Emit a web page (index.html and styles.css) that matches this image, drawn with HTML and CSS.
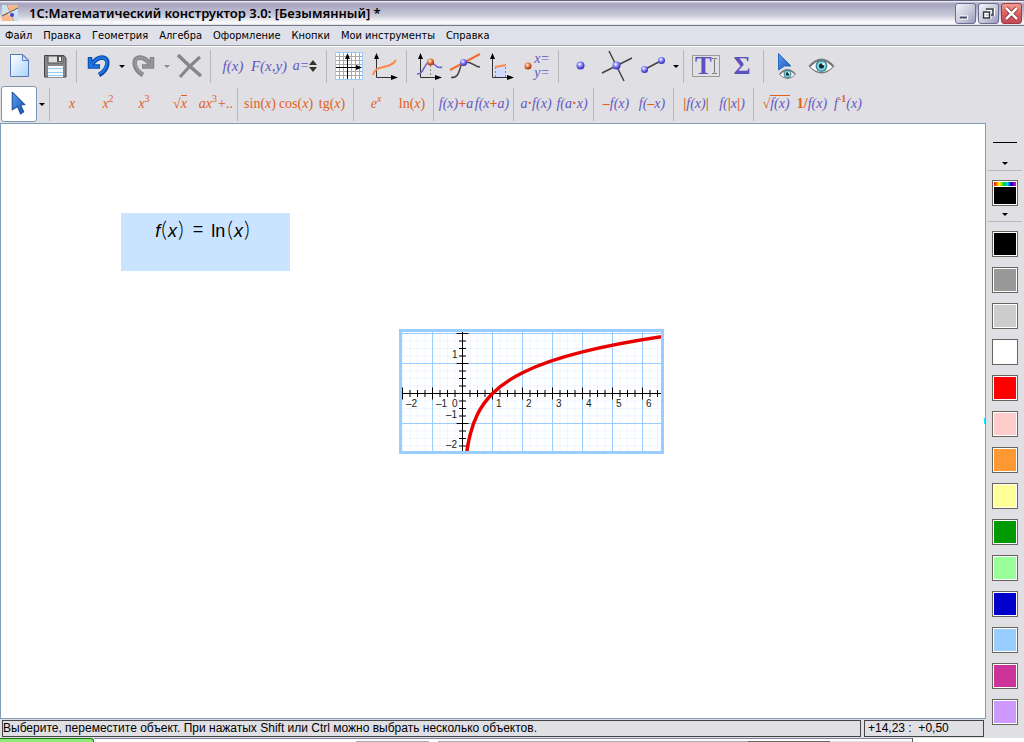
FILE: index.html
```html
<!DOCTYPE html>
<html lang="ru">
<head>
<meta charset="utf-8">
<title>1С:Математический конструктор 3.0</title>
<link rel="stylesheet" href="styles.css">
</head>
<body>
<svg class="defs" aria-hidden="true">
  <defs>
    <radialGradient id="blue" cx=".4" cy=".35" r=".6"><stop offset="0" stop-color="#fff"/><stop offset=".45" stop-color="#8a8cff"/><stop offset="1" stop-color="#3a35b8"/></radialGradient>
    <radialGradient id="orange" cx=".4" cy=".35" r=".6"><stop offset="0" stop-color="#fff"/><stop offset=".45" stop-color="#f08a50"/><stop offset="1" stop-color="#a83808"/></radialGradient>
    <linearGradient id="page" x1="0" y1="0" x2="1" y2="1"><stop offset="0" stop-color="#fff"/><stop offset="1" stop-color="#a8d4fa"/></linearGradient>
    <linearGradient id="cursor" x1="0" y1="0" x2="1" y2="1"><stop offset="0" stop-color="#5aa0f0"/><stop offset="1" stop-color="#1850b0"/></linearGradient>
    <symbol id="axes" viewBox="0 0 36 36"><path d="M9.5 8V29.5H28" fill="none" stroke="#333"/><path d="M9.5 5l2.500 6h-5zM31 29.500l-7-2.500v5z"/></symbol>
    <symbol id="eye" viewBox="0 0 26 16"><path d="M0 8Q13-7 26 8Q13 23 0 8z" fill="#777"/><path d="M2 9Q13-3 24 9Q13 19 2 9z" fill="#fff"/><circle cx="13" cy="8" r="6" fill="#3d8b96"/><circle cx="13" cy="8" r="4.500" fill="#7ed5dc"/><circle cx="13" cy="8" r="2.500" fill="#123"/><circle cx="15" cy="6" r="1.300" fill="#fff"/></symbol>
    <symbol id="pointer" viewBox="0 0 14 22"><path d="M1 0L13 12L9 12.500L12 19L9 21L6 14L1 17z" fill="url(#cursor)" stroke="#1c4f9c"/></symbol>
  </defs>
</svg>

<header class="titlebar">
  <svg class="app-icon" width="16" height="16" viewBox="0 0 16 16"><path d="M0 0H16V16H0z" fill="#c8e4f4"/><path d="M0 10L5 7L11 16H0zM6 0H16V3L8 7z" fill="#f7b98a"/><path d="M0 11L16 3" stroke="#555"/><path d="M5 0L12 16" stroke="#f08040"/><circle cx="10" cy="10" r="2" fill="#4040d0"/></svg>
  <h1 class="title">1С:Математический конструктор 3.0: [Безымянный] *</h1>
  <button class="win" aria-label="Свернуть"><svg width="19" height="19"><path d="M4 13.500h8" stroke="#fff" stroke-width="4"/><path d="M4 13.500h7" stroke="#446" stroke-width="2"/></svg></button>
  <button class="win" aria-label="Восстановить"><svg width="19" height="19" fill="none"><path d="M8 5.500h6.500v6" stroke="#fff" stroke-width="3"/><path d="M5 8.500h6v5H5z" stroke="#fff" stroke-width="3"/><path d="M7 5h7v6h-2M4.500 8h6v6h-6z" stroke="#334" stroke-width="1.500"/></svg></button>
  <button class="win close" aria-label="Закрыть"><svg width="19" height="19"><path d="M4 4l11 11M15 4L4 15" stroke="#702028" stroke-width="4"/><path d="M4 4l11 11M15 4L4 15" stroke="#fff" stroke-width="2.500"/></svg></button>
</header>

<nav class="menu">
  <button>Файл</button><button>Правка</button><button>Геометрия</button><button>Алгебра</button><button>Оформление</button><button>Кнопки</button><button>Мои инструменты</button><button>Справка</button>
</nav>

<div class="toolbars">
  <div class="toolbar" role="toolbar">
    <button class="tool" aria-label="Новый"><svg class="icon" viewBox="0 0 36 36"><path d="M9.500 6.500H22L27.500 12V28.500H9.500z" fill="url(#page)" stroke="#5878b8"/><path d="M21.500 7v5.500H27z" fill="#d5e9fc" stroke="#5878b8"/></svg></button>
    <button class="tool" aria-label="Сохранить"><svg class="icon" viewBox="0 0 36 36"><path d="M7.500 7.500H27L29 10V29H7.500z" fill="#888" stroke="#444"/><path d="M11 8h15v7H11z" fill="#ddd" stroke="#555"/><path d="M20 8h5v6h-5z" fill="#555"/><path d="M22 9h2v4h-2z" fill="#fff"/><path d="M11 18h15v11H11z" fill="#f8fcff"/><path d="M11 20.500h15M11 24.500h15M11 27.500h15" stroke="#94ccf4"/></svg></button>
    <i class="sep"></i>
    <button class="tool" aria-label="Отменить"><svg class="icon" viewBox="0 0 36 36" fill="none"><path d="M9 9V18.500H19M10 17C13 13 16 9.500 21 9.500C30 10 27 22 18 27" stroke="#0b48ae" stroke-width="4.500"/><path d="M9 10V18.500H18M10 17C13 13 16 9.500 21 9.500C29 10 26 22 18 26" stroke="#1c74dc" stroke-width="2.500"/></svg></button>
    <button class="drop" aria-label="Список отмены"></button>
    <button class="tool" aria-label="Повторить"><svg class="icon" viewBox="0 0 36 36" fill="none"><path d="M26 9V18.500H16M25 17C22 13 19 9.500 14 9.500C5 10 8 22 17 27" stroke="#858585" stroke-width="4.500"/><path d="M26 10V18.500H17M25 17C22 13 19 9.500 14 9.500C6 10 9 22 17 26" stroke="#999" stroke-width="2"/></svg></button>
    <button class="drop faded" aria-label="Список повтора"></button>
    <button class="tool" aria-label="Удалить"><svg class="icon" viewBox="0 0 36 36" fill="none" stroke="#868686"><path d="M7 7Q18 18 30 28" stroke-width="3.500"/><path d="M29 9Q18 18 9 29" stroke-width="3"/></svg></button>
    <i class="sep"></i>
    <button class="tool math big">f(x)</button>
    <button class="tool math big">F(x,y)</button>
    <button class="tool math"><span>a=</span><svg width="8" height="14"><path d="M4 1l4 5H0zM4 13l4-5H0z" fill="#333"/></svg></button>
    <i class="sep"></i>
    <button class="tool" aria-label="Система координат"><svg class="icon" viewBox="0 0 36 36"><path d="M4.500 4.500h27v27h-27z" fill="#fff" stroke="#99ccff"/><path d="M8.500 5v26M12.500 5v26M20.500 5v26M24.500 5v26M28.500 5v26M5 8.500h26M5 12.500h26M5 16.500h26M5 23.500h26M5 27.500h26" stroke="#aaa"/><path d="M16.500 6v25M5 19.500h24" stroke="#000"/><path d="M16.500 5l2.500 6h-5zM31 19.500l-6-2.500v5z"/></svg></button>
    <button class="tool" aria-label="График"><svg class="icon" viewBox="0 0 36 36"><use href="#axes"/><path d="M6 27C9 15 22 23 29 12" fill="none" stroke="#ff8548" stroke-width="2"/></svg></button>
    <i class="sep"></i>
    <button class="tool" aria-label="Точка на графике"><svg class="icon" viewBox="0 0 36 36"><use href="#axes"/><path d="M6 26C13 27 13 14 19 14C24 14 25 22 31 19" fill="none" stroke="#6c60cc" stroke-width="1.500"/><path d="M19.500 17v12" stroke="#888" stroke-dasharray="2"/><circle cx="19.500" cy="14" r="3.500" fill="url(#orange)"/></svg></button>
    <button class="tool" aria-label="Касательная"><svg class="icon" viewBox="0 0 36 36" fill="none"><path d="M4 29.500C16 30 10 14 19 14C26 14 28 19 33 19" stroke="#444" stroke-width="1.500"/><path d="M3 22L33 6" stroke="#ee7034" stroke-width="2"/><circle cx="16.500" cy="14.500" r="3.500" fill="url(#blue)"/></svg></button>
    <button class="tool" aria-label="Интеграл"><svg class="icon" viewBox="0 0 36 36"><path d="M12.500 19h10v10h-10z" fill="#cddcff"/><path d="M12.500 19v10M22.500 19v10" stroke="#888" stroke-dasharray="2"/><use href="#axes"/><path d="M12 19L23 17" stroke="#ff8548" stroke-width="2"/></svg></button>
    <button class="tool math coords"><svg width="8" height="8"><circle cx="4" cy="4" r="3.500" fill="url(#orange)"/></svg><span class="pair"><span>x=</span><span>y=</span></span></button>
    <i class="sep"></i>
    <button class="tool" aria-label="Точка"><svg class="icon" viewBox="0 0 36 36"><circle cx="17.500" cy="17.500" r="4" fill="url(#blue)"/></svg></button>
    <button class="tool" aria-label="Пересечение"><svg class="icon" viewBox="0 0 36 36"><path d="M3 25L33 10M10 3L25 33" stroke="#444" stroke-width="1.500"/><circle cx="17.500" cy="17.500" r="4" fill="url(#blue)"/></svg></button>
    <button class="tool" aria-label="Отрезок"><svg class="icon" viewBox="0 0 36 36"><path d="M9.500 21.500L26.500 12.500" stroke="#444" stroke-width="1.500"/><circle cx="9.500" cy="21.500" r="3.500" fill="url(#blue)"/><circle cx="26.500" cy="12.500" r="3.500" fill="url(#blue)"/></svg></button>
    <button class="drop" aria-label="Другие линии"></button>
    <i class="sep"></i>
    <button class="tool" aria-label="Текст"><svg class="icon" viewBox="0 0 36 36"><path d="M4.500 7.500h27v21h-27z" fill="none" stroke="#999"/><text class="letter" x="7" y="26">T</text><path d="M24 10.500h2l.500 1l.500-1h2M26.500 11v14M24 25.500h2l.500-1l.500 1h2" fill="none" stroke="#777"/></svg></button>
    <button class="tool sigma">Σ</button>
    <i class="sep"></i>
    <button class="tool" aria-label="Показать или скрыть"><svg class="icon" viewBox="0 0 36 36"><path d="M10.500 5.500L23 18L16.500 18L10.500 22z" fill="url(#cursor)" stroke="#2a6ac0"/><use href="#eye" x="11" y="20" width="17" height="12"/></svg></button>
    <button class="tool" aria-label="Скрытые объекты"><svg class="icon" viewBox="0 0 36 36"><use href="#eye" x="4" y="10" width="27" height="16"/></svg></button>
  </div>

  <div class="toolbar" role="toolbar">
    <button class="tool active" aria-label="Выбор"><svg class="icon" viewBox="0 0 36 36"><use href="#pointer" x="10" y="6" width="15" height="23"/></svg></button>
    <button class="drop" aria-label="Режимы выбора"></button>
    <i class="sep"></i>
    <button class="tool math warm">x</button>
    <button class="tool math warm"><span>x<sup>2</sup></span></button>
    <button class="tool math warm"><span>x<sup>3</sup></span></button>
    <button class="tool math warm"><span>√<span class="root">x</span></span></button>
    <button class="tool math warm"><span>ax<sup>3</sup>+..</span></button>
    <i class="sep"></i>
    <button class="tool math warm"><span><b>sin(</b>x<b>)</b></span></button>
    <button class="tool math warm"><span><b>cos(</b>x<b>)</b></span></button>
    <button class="tool math warm"><span><b>tg(</b>x<b>)</b></span></button>
    <i class="sep"></i>
    <button class="tool math warm"><span>e<sup><i>x</i></sup></span></button>
    <button class="tool math warm"><span><b>ln(</b>x<b>)</b></span></button>
    <i class="sep"></i>
    <button class="tool math"><span>f(x)<em>+</em>a</span></button>
    <button class="tool math"><span>f(x<em>+</em>a)</span></button>
    <i class="sep"></i>
    <button class="tool math"><span>a<em>·</em>f(x)</span></button>
    <button class="tool math"><span>f(a<em>·</em>x)</span></button>
    <i class="sep"></i>
    <button class="tool math"><span><em>–</em>f(x)</span></button>
    <button class="tool math"><span>f(<em>–</em>x)</span></button>
    <i class="sep"></i>
    <button class="tool math"><span><em>|</em>f(x)<em>|</em></span></button>
    <button class="tool math"><span>f(<em>|</em>x<em>|</em>)</span></button>
    <i class="sep"></i>
    <button class="tool math"><span><em>√</em><span class="root">f(x)</span></span></button>
    <button class="tool math"><span><em>1/</em>f(x)</span></button>
    <button class="tool math"><span>f<sup><em>-1</em></sup>(x)</span></button>
  </div>
</div>

<div class="workspace">
  <div class="document">
    <main class="canvas">
      <div class="formula"><span><i>f</i><span class="paren">(</span><i>x</i><span class="paren">)</span></span><span>=</span><span>ln<span class="paren open">(</span><i>x</i><span class="paren">)</span></span></div>
      <div class="plot">
        <svg class="graph" viewBox="0 0 259 119" role="img" aria-label="График ln(x)">
          <defs><pattern id="minor" width="7.500" height="7.500" patternUnits="userSpaceOnUse" x="0" y="1"><path d="M.500 0V7.500M0 .500H7.500" stroke="#edf6ff"/></pattern></defs>
          <path d="M0 0H259V119H0z" fill="url(#minor)"/>
          <path d="M30.500 0V119M90.500 0V119M120.500 0V119M150.500 0V119M180.500 0V119M210.500 0V119M240.500 0V119M0 1.500H259M0 31.500H259M0 91.500H259" stroke="#99ccff"/>
          <path d="M0 61.500H259M60.500 0V119" stroke="#000"/>
          <path d="M0 61.500H259" stroke="#000" stroke-width="7" stroke-dasharray="1 6.500"/>
          <path d="M60.500 1V119" stroke="#000" stroke-width="7" stroke-dasharray="1 6.500"/>
          <path d="M0 61.500H259M60.500 1V119" stroke="#000" stroke-width="12" stroke-dasharray="1 29"/>
          <path d="M64.250 123.900C65.500 113.900 66.750 108.100 68 103.100C70.500 93.100 73 87.300 75.500 82.300C80.500 72.300 85.500 66.500 90.500 61.500C100.500 51.500 110.500 45.700 120.500 40.700C140.500 30.700 160.500 24.900 180.500 19.900C220.500 9.900 260.500 4.100 300.500-.900" fill="none" stroke="#e80000" stroke-width="3.500"/>
          <g class="ticks"><text x="4" y="75">–2</text><text x="34" y="75">–1</text><text x="50" y="75">0</text><text x="94" y="75">1</text><text x="124" y="75">2</text><text x="154" y="75">3</text><text x="184" y="75">4</text><text x="214" y="75">5</text><text x="244" y="75">6</text><text x="50" y="26">1</text><text x="44" y="86">–1</text><text x="44" y="116">–2</text></g>
        </svg>
      </div>
      <i class="marker"></i>
    </main>
    <footer class="status"><p class="hint">Выберите, переместите объект. При нажатых Shift или Ctrl можно выбрать несколько объектов.</p><p class="position">+14,23 :&nbsp; +0,50</p></footer>
  </div>
  <aside class="palette">
    <button class="stroke" aria-label="Толщина линии"></button>
    <button class="swatch spectrum" aria-label="Выбрать цвет"></button>
    <button class="drop wide" aria-label="Палитра"></button>
    <hr class="rule">
    <div class="colors">
      <button class="swatch black" aria-label="Чёрный"></button>
      <button class="swatch gray" aria-label="Серый"></button>
      <button class="swatch silver" aria-label="Светло-серый"></button>
      <button class="swatch white" aria-label="Белый"></button>
      <button class="swatch red" aria-label="Красный"></button>
      <button class="swatch pink" aria-label="Розовый"></button>
      <button class="swatch amber" aria-label="Оранжевый"></button>
      <button class="swatch yellow" aria-label="Жёлтый"></button>
      <button class="swatch green" aria-label="Зелёный"></button>
      <button class="swatch lime" aria-label="Салатовый"></button>
      <button class="swatch navy" aria-label="Синий"></button>
      <button class="swatch sky" aria-label="Голубой"></button>
      <button class="swatch magenta" aria-label="Пурпурный"></button>
      <button class="swatch violet" aria-label="Сиреневый"></button>
    </div>
  </aside>
</div>
<div class="taskbar"><i class="start"></i><i class="tasks"></i></div>
</body>
</html>
```

FILE: styles.css
```css
* { box-sizing: border-box; }
body {
  margin: 0;
  height: 100vh;
  display: flex;
  flex-direction: column;
  overflow: hidden;
  background: #e0dfe3;
  color: #000;
  font-family: "Liberation Sans", Arial, sans-serif;
}
button { margin: 0; padding: 0; border: 0; background: none; font: inherit; color: inherit; }
svg { flex: none; }
.defs { position: absolute; width: 0; height: 0; }

.titlebar {
  display: flex;
  align-items: center;
  gap: 2px;
  height: 26px;
  padding: 0 2px;
  border-top: 1px solid #68647f;
  border-bottom: 1px solid #77778a;
  background: linear-gradient(#fff 0, #b0aec6 2px, #a8a6c0 4px, #c8c8d8 14px, #fff 22px, #d8d8e0 24px);
}
.title {
  flex: 1;
  margin: 0;
  padding-left: 9px;
  font: 600 13px/20px "Noto Sans", "DejaVu Sans", sans-serif;
  white-space: nowrap;
}
.win {
  width: 21px;
  height: 21px;
  border: 1px solid #6a6d95;
  border-radius: 3px;
  background: linear-gradient(135deg, #f4f4fa, #c4c4d8 60%, #9698ba);
}
.win svg { display: block; }
.close { border-color: #a03848; background: linear-gradient(#f0a090, #e0605c 50%, #c04858); }

.menu {
  display: flex;
  gap: 11px;
  height: 20px;
  padding: 0 5px;
  border-bottom: 1px solid #a0a0a4;
  background: #dee1ea;
  font: 11px/18px "DejaVu Sans Condensed", "DejaVu Sans", sans-serif;
  white-space: nowrap;
}

.toolbars {
  display: flex;
  flex-direction: column;
  gap: 2px;
  padding: 1px 1px;
  border-top: 1px solid #fff;
}
.toolbar { display: flex; height: 36px; }
.tool {
  display: flex;
  flex: none;
  align-items: center;
  justify-content: center;
  width: 36px;
  height: 36px;
}
.active { border: 1px solid #7b98b5; border-radius: 3px; background: #fff; }
.icon { width: 36px; height: 36px; }
.sep { flex: none; width: 1px; height: 33px; margin: 2px 4px 0 3px; background: #b8b7bc; }
.drop {
  display: flex;
  flex: none;
  align-items: center;
  justify-content: center;
  width: 9px;
  height: 36px;
}
.drop::after {
  content: "";
  border: 3px solid transparent;
  border-top-color: #000;
  border-bottom-width: 0;
}
.faded::after { border-top-color: #888; }
.math {
  color: #6457c4;
  font: italic 14px/20px "Liberation Serif", "Times New Roman", serif;
  white-space: nowrap;
}
.big { font-size: 15px; }
.warm, .math em { color: #e2601c; }
.math em { font-style: normal; font-weight: bold; }
.math b { font-style: normal; font-weight: normal; }
.math sup { font-size: 10px; line-height: 10px; font-style: normal; }
.root { border-top: 1px solid #e2601c; }
.coords { gap: 2px; line-height: 14px; }
.pair { display: flex; flex-direction: column; }
.letter { fill: #5b50c0; font: bold 25px "Liberation Serif", serif; }
.sigma { color: #5b50c0; font: bold 26px/36px "Liberation Serif", serif; }

.workspace { display: flex; flex: 1; min-height: 0; }
.document { display: flex; flex: 1; flex-direction: column; min-width: 0; }
.canvas { position: relative; flex: 1; border: 1px solid #7f9db9; background: #fff; }
.formula {
  position: absolute;
  left: 120px;
  top: 89px;
  display: flex;
  justify-content: center;
  gap: 8px;
  width: 169px;
  height: 58px;
  padding: 3px 5px 0 0;
  background: #cae4ff;
  font-size: 18px;
  line-height: 26px;
}
.paren { padding: 0 1px; font: 300 22px/26px Lato, "Liberation Serif", serif; }
.open { padding-left: 2px; }
.plot {
  position: absolute;
  left: 398px;
  top: 205px;
  border: 3px solid #99ccff;
  background: #fff;
}
.graph { display: block; width: 259px; height: 119px; }
.ticks { fill: #222; font-size: 10px; }
.marker { position: absolute; right: 0; top: 294px; width: 1px; height: 6px; background: #00f0ff; }

.status { display: flex; gap: 3px; padding: 1px 2px; font-size: 12px; line-height: 15px; white-space: nowrap; }
.status p { margin: 0; border: 1px solid #444; }
.hint { flex: 1; min-width: 0; overflow: hidden; }
.position { width: 120px; padding-left: 3px; }

.palette { display: flex; flex-direction: column; align-items: center; width: 38px; }
.stroke {
  display: flex;
  flex-direction: column;
  align-items: center;
  justify-content: space-between;
  width: 34px;
  height: 48px;
  margin-bottom: 9px;
  padding: 19px 5px 5px;
  border-bottom: 1px solid #b8b7bc;
}
.stroke::before { content: ""; width: 24px; height: 1px; background: #000; }
.stroke::after { content: ""; border: 3px solid transparent; border-top-color: #000; border-bottom-width: 0; }
.swatch {
  flex: none;
  width: 26px;
  height: 26px;
  border: 1px solid #66665e;
  box-shadow: inset 0 0 0 1px #fff;
}
.spectrum {
  padding: 1px;
  background: linear-gradient(90deg, #f00, #ff0 25%, #0c3 45%, #0cf 62%, #00c 78%, #f09) content-box top / 100% 4px no-repeat,
    linear-gradient(#fff 5px, #000 5px) content-box;
}
.wide { height: 15px; width: 34px; padding-top: 1px; }
.rule { width: 34px; height: 1px; margin: 0 0 9px; border: 0; background: #b8b7bc; }
.colors { display: flex; flex-direction: column; gap: 10px; }
.black { background: #000; }
.gray { background: #999; }
.silver { background: #ccc; }
.white { background: #fff; }
.red { background: #f00; }
.pink { background: #fcc; }
.amber { background: #f93; }
.yellow { background: #ff9; }
.green { background: #090; }
.lime { background: #9f9; }
.navy { background: #00c; }
.sky { background: #9cf; }
.magenta { background: #c39; }
.violet { background: #c9f; }

.taskbar { display: flex; flex: none; height: 4px; background: #fff; }
.start { width: 94px; border-top: 1px solid #187818; border-right: 1px solid #187818; border-radius: 0 3px 0 0; background: #90e878; }
.tasks {
  width: 80%;
  border-top: 1px solid #8886a8;
  border-right: 1px solid #555;
  background: linear-gradient(90deg, #fff 32%, #a8a8b8 32% 41%, #fff 41% 42%, #a8a8b8 42% 80%, #666 80% 90%, #e0e0ec 90%) bottom / 100% 1px no-repeat #fff;
}
```
